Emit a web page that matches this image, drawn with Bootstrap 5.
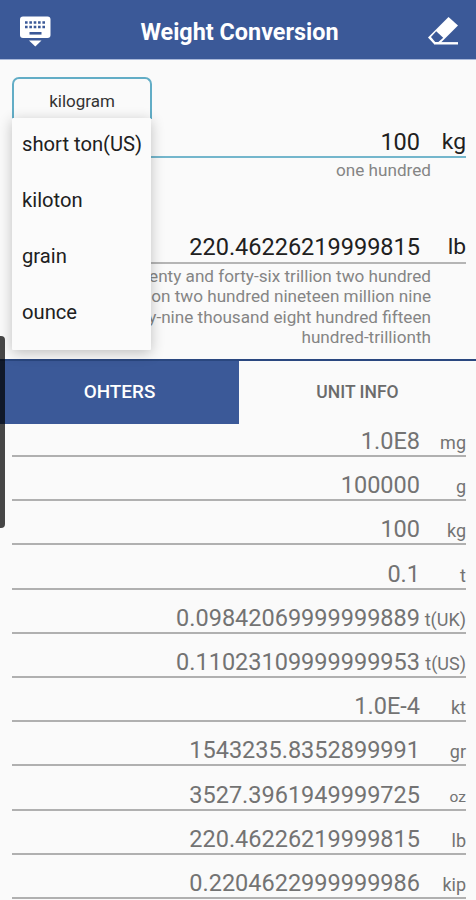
<!DOCTYPE html>
<html lang="en">
<head>
<meta charset="utf-8">
<meta name="viewport" content="width=device-width, initial-scale=1">
<title>Weight Conversion</title>
<link href="https://cdn.jsdelivr.net/npm/bootstrap@5.3.0/dist/css/bootstrap.min.css" rel="stylesheet">
<style>
body{font-family:Roboto,sans-serif;background:#fafafa;color:#202020;height:900px}
.app{height:900px}
.topbar{height:60px;background:#3b5998;border-bottom:1px solid #aab9da;padding:3px 17px 0 18px}
.topbar h1{font-size:23.4px;font-weight:700;padding-top:2px}
.converter{height:299px;padding:17px 10px 0 12px}
.unit-btn{width:140px;height:42px;border:2px solid #62adc6;border-bottom:0;border-radius:7px 7px 0 0;font-size:17px;padding-top:10px;line-height:24px;color:#333;background:#fafafa}
.entry{font-size:23.5px;line-height:28px}
.entry-from{height:33px;margin-top:6px;border-bottom:2px solid #74b6cc;padding-top:3px}
.entry-to{height:35px;margin-top:50px;border-bottom:2px solid #b5b5b5;padding-top:4px}
.unit{width:46px;flex:none}
.entry .unit{font-size:22.8px}
.words{font-size:17.15px;line-height:20.3px;color:#858585;padding-right:35px;white-space:nowrap}
.from-words{height:21px;padding-top:2px}
.to-words{padding-top:2px}
.unit-menu{position:absolute;left:12px;top:118px;width:139px;height:232px;background:#fbfbfb;border-radius:1px;box-shadow:0 3px 14px rgba(0,0,0,.24);z-index:3;font-size:20.2px}
.unit-menu li{height:56px;padding:0 10px;line-height:53px;color:#202020;white-space:nowrap}
.tabs{height:65px;border-top:2px solid #2a477f}
.tabs .btn{border-radius:0;border:0;font-size:18.9px;font-weight:500;width:239px;padding:0}
.tabs .btn.active{background:#3b5998;color:#fff}
.tabs .btn.other{width:237px;color:#6b6b6b;font-size:17.5px}
.results{padding:0 10px 0 12px}
.result{height:44.2px;border-bottom:2px solid #b0b0b0;font-size:23.5px;line-height:28px;color:#737373}
.result:first-child{height:33px}
.result .unit{font-size:18px;line-height:24px}
.result .unit-sm{font-size:15.5px}
.edge-handle{position:absolute;left:0;top:336px;width:5px;height:192px;background:rgba(0,0,0,.72);border-radius:0 4px 4px 0;z-index:4}
</style>
<script src="https://cdn.jsdelivr.net/npm/bootstrap@5.3.0/dist/js/bootstrap.bundle.min.js"></script>
</head>
<body>
<div class="app position-relative overflow-hidden">
  <header class="topbar d-flex justify-content-between align-items-center text-white">
    <svg width="34" height="34" viewBox="0 0 34 34" aria-label="Keyboard">
      <rect x="2" y="2.500" width="30.500" height="21.500" rx="3" fill="#fff"/>
      <path d="M7 8.500h21M7 13h21" stroke="#3b5998" stroke-width="2.600" stroke-dasharray="2.600 1.750"/>
      <path d="M11.500 19.300h12" stroke="#3b5998" stroke-width="2.600"/>
      <path d="M11 26.500h12.500l-6.200 6z" fill="#fff"/>
    </svg>
    <h1 class="m-0">Weight Conversion</h1>
    <svg width="32" height="32" viewBox="0 0 32 32" aria-label="Eraser">
      <path d="M21.500 2l9.500 8.500-18.500 18.500H7L1 22.500z" fill="#fff"/>
      <path d="M9.200 16.300l7 6.500-4.800 4.200H8.200L4 22z" fill="#3b5998"/>
      <path d="M7 28.300h24" stroke="#fff" stroke-width="2.400"/>
    </svg>
  </header>

  <main>
    <section class="converter">
      <div class="unit-btn text-center">kilogram</div>
      <div class="entry entry-from d-flex justify-content-end"><span>100</span><span class="unit text-end">kg</span></div>
      <div class="words from-words text-end">one hundred</div>
      <div class="entry entry-to d-flex justify-content-end"><span>220.46226219999815</span><span class="unit text-end">lb</span></div>
      <div class="words to-words text-end">two hundred twenty and forty-six trillion two hundred<br>sixty-two billion two hundred nineteen million nine<br>hundred ninety-nine thousand eight hundred fifteen<br>hundred-trillionth</div>
    </section>

    <nav class="tabs d-flex">
      <button class="btn active" type="button">OHTERS</button>
      <button class="btn other" type="button">UNIT INFO</button>
    </nav>

    <section class="results">
      <div class="result d-flex justify-content-end align-items-end"><span>1.0E8</span><span class="unit text-end">mg</span></div>
      <div class="result d-flex justify-content-end align-items-end"><span>100000</span><span class="unit text-end">g</span></div>
      <div class="result d-flex justify-content-end align-items-end"><span>100</span><span class="unit text-end">kg</span></div>
      <div class="result d-flex justify-content-end align-items-end"><span>0.1</span><span class="unit text-end">t</span></div>
      <div class="result d-flex justify-content-end align-items-end"><span>0.09842069999999889</span><span class="unit text-end">t(UK)</span></div>
      <div class="result d-flex justify-content-end align-items-end"><span>0.11023109999999953</span><span class="unit text-end">t(US)</span></div>
      <div class="result d-flex justify-content-end align-items-end"><span>1.0E-4</span><span class="unit text-end">kt</span></div>
      <div class="result d-flex justify-content-end align-items-end"><span>1543235.8352899991</span><span class="unit text-end">gr</span></div>
      <div class="result d-flex justify-content-end align-items-end"><span>3527.3961949999725</span><span class="unit unit-sm text-end">oz</span></div>
      <div class="result d-flex justify-content-end align-items-end"><span>220.46226219999815</span><span class="unit text-end">lb</span></div>
      <div class="result d-flex justify-content-end align-items-end"><span>0.2204622999999986</span><span class="unit text-end">kip</span></div>
    </section>
  </main>

  <ul class="unit-menu list-unstyled m-0">
    <li>short ton(US)</li>
    <li>kiloton</li>
    <li>grain</li>
    <li>ounce</li>
  </ul>
  <div class="edge-handle"></div>
</div>
</body>
</html>
